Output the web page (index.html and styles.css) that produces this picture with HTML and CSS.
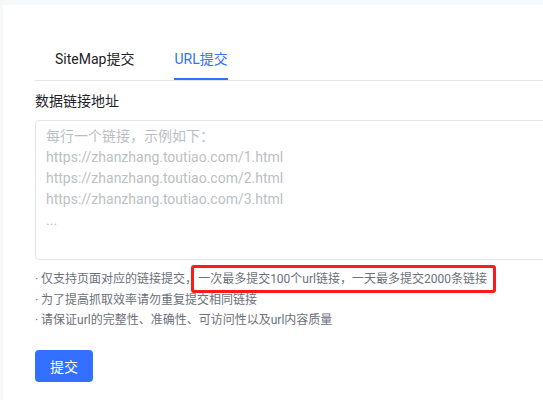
FILE: index.html
```html
<!DOCTYPE html>
<html lang="zh-CN">
<head>
<meta charset="utf-8">
<link rel="stylesheet" href="styles.css">
</head>
<body>
<div class="card">
  <div class="tabs">
    <div class="tab">SiteMap提交</div>
    <div class="tab active">URL提交</div>
  </div>
  <div class="label">数据链接地址</div>
  <div class="textarea">
    <div class="ph">每行一个链接，示例如下：</div>
    <div class="ph">https://zhanzhang.toutiao.com/1.html</div>
    <div class="ph">https://zhanzhang.toutiao.com/2.html</div>
    <div class="ph">https://zhanzhang.toutiao.com/3.html</div>
    <div class="ph">...</div>
  </div>
  <ul class="notes">
    <li>· 仅支持页面对应的链接提交，<span class="mark">一次最多提交100个url链接，一天最多提交2000条链接</span></li>
    <li>· 为了提高抓取效率请勿重复提交相同链接</li>
    <li>· 请保证url的完整性、准确性、可访问性以及url内容质量</li>
  </ul>
  <button class="btn">提交</button>
</div>
</body>
</html>
```
FILE: styles.css
```css
html, body {
  margin: 0;
  padding: 0;
  background: #f7f8fa;
  overflow: hidden;
  height: 400px;
}
body {
  font-family: Roboto, "Noto Sans CJK SC", sans-serif;
  color: #1f2329;
}
.card {
  margin: 5px 0 0 3px;
  background: #fff;
  height: 395px;
  padding: 33px 0 0 32px;
  box-sizing: border-box;
  overflow: hidden;
}
.tabs {
  display: flex;
  border-bottom: 1px solid #e5e6eb;
}
.tab {
  margin: 0 20px;
  padding-top: 2px;
  font-size: 14px;
  line-height: 38px;
  border-bottom: 2px solid transparent;
  color: #1f2329;
}
.tab.active {
  color: #3370ff;
  border-bottom-color: #3370ff;
}
.label {
  margin-top: 9px;
  font-size: 14px;
  line-height: 22px;
  color: #1f2329;
}
.textarea {
  margin-top: 8px;
  width: 600px;
  height: 140px;
  box-sizing: border-box;
  border: 1px solid #e5e6eb;
  border-radius: 4px;
  padding: 5px 10px;
}
.ph {
  font-size: 14px;
  line-height: 21px;
  color: #bbbfc4;
}
.notes {
  list-style: none;
  margin: 9px 0 0;
  padding: 0;
  font-size: 12px;
  line-height: 20.5px;
  color: #6b7079;
}
.mark {
  border: 3px solid #ff1a1a;
  border-radius: 3px;
  padding: 4px 6px 4px 4px;
  margin-left: -6px;
}
.btn {
  margin-top: 19px;
  width: 58px;
  height: 32px;
  border: none;
  border-radius: 4px;
  background: #3370ff;
  color: #fff;
  font-family: Roboto, "Noto Sans CJK SC", sans-serif;
  font-size: 14px;
  padding: 0;
}
```
